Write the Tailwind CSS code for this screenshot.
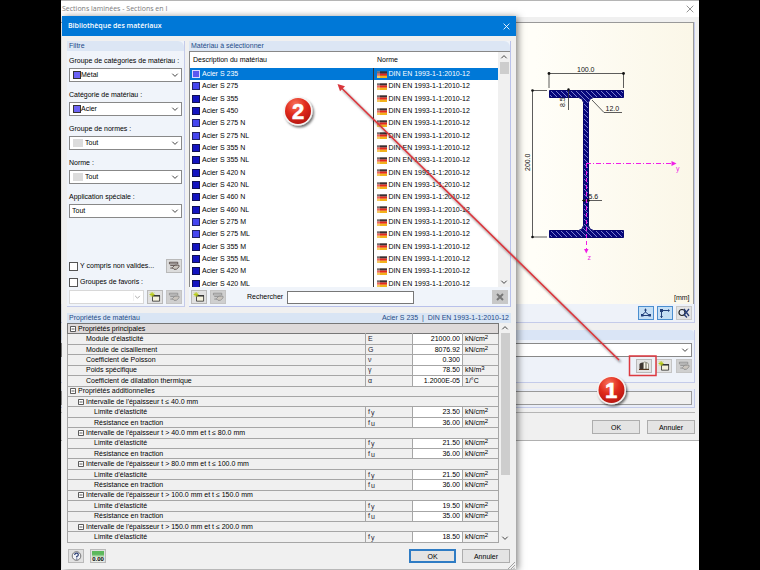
<!DOCTYPE html>
<html lang="fr">
<head>
<meta charset="utf-8">
<title>Bibliothèque des matériaux</title>
<script src="https://cdn.jsdelivr.net/npm/@tailwindcss/browser@4"></script>
</head>
<body class="bg-black font-['Liberation_Sans',sans-serif] text-[7px] leading-[10px] text-black">
<svg class="hidden" aria-hidden="true">
  <symbol id="chev" viewBox="0 0 8 8"><path d="M1.3 2.7 4 5.4 6.7 2.7" fill="none" stroke="#444" stroke-width="1"/></symbol>
  <symbol id="new" viewBox="0 0 14 12"><path d="M4 4.500h8.500v6.500H4z" fill="#f4f1dc" stroke="#333"/><path d="M3.500 4.500h9.500" stroke="#333" stroke-width="1.600"/><path d="M3.500 0v6M.5 3h6M1.300.8l4.400 4.400M5.700.8 1.300 5.200" stroke="#b9cc1c" stroke-width="1.200"/></symbol>
  <symbol id="edit" viewBox="0 0 14 12"><path d="M1.500 1.500h10v2h-10zM2.500 5.500h8M2.500 8.500h5" fill="#ddd" stroke="currentColor"/><path d="m5 8 3-3 5 0v2l-3 3H7z" fill="#c9c4bd" stroke="currentColor" stroke-width=".9"/></symbol>
  <symbol id="flag" viewBox="0 0 10 7"><path d="M0 .3h10v2.300H0z" fill="#3a3032"/><path d="M0 2.500h10v2.300H0z" fill="#e5281e"/><path d="M0 4.700h10V7H0z" fill="#f2b21c"/><path d="M0 0h3v7H0z" fill="#fff" opacity=".3"/></symbol>
</svg>
<main class="relative mx-[61px] min-h-screen overflow-hidden bg-white">

  <section aria-label="Sections laminées" class="border-b border-[#b0b0b0] bg-[#f0f0f0]">
    <header class="flex h-[17px] items-center justify-between border-t border-[#b5b5b5] bg-white pr-[5px] pl-px text-[#7d7d7d]">
      <h1 class="font-['Open_Sans',sans-serif]">Sections laminées - Sections en I</h1>
      <button aria-label="Fermer la fenêtre"><svg class="size-2" viewBox="0 0 8 8"><path d="m.7.7 6.600 6.600M7.300.7.7 7.300" stroke="#888" stroke-width=".9"/></svg></button>
    </header>
    <div class="pt-[5px] pr-1">
      <div class="border-r border-b border-[#c4cbea] bg-[#eef2f9]">
        <div class="flex justify-end border-t border-r border-[#999] bg-linear-to-r from-[#fffef8] from-75% to-[#fbf7e8]">
          <svg class="h-[281px] w-[177px]" viewBox="516 23 177 281" font-family="Liberation Sans, sans-serif" font-size="7" role="img" aria-label="Section en I">
            <defs><pattern id="hatch" width="5" height="5" patternUnits="userSpaceOnUse"><path d="M0 0h5v5H0z" fill="#07077c"/><path d="m-1-1 7 7M-1 4l2 2M4-1l2 2" stroke="#aeb2ee" stroke-width=".7"/></pattern></defs>
            <path d="M549.500 90.500h74v7h-30q-4.500.5-5 5v123q.5 4.500 5 5h30v7h-74v-7h29q4.500-.5 5-5v-123q-.5-4.500-5-5h-29z" fill="url(#hatch)" stroke="#07076e" stroke-width="1"/>
            <g fill="none" stroke="#333" stroke-width=".8"><path d="M549 88V73.500h74.500V88M547 90.500h-14.500v146.500H547M568.500 89v21M592 100l12 12.500h18M582 200.500h20"/></g>
            <g fill="#111"><circle cx="549" cy="73.500" r="1.400"/><circle cx="623.500" cy="73.500" r="1.400"/><circle cx="532.500" cy="90.500" r="1.300"/><circle cx="532.500" cy="237" r="1.300"/><circle cx="568.500" cy="89.500" r="1.200"/><circle cx="584" cy="200.500" r="1.300"/><circle cx="588.500" cy="200.500" r="1.300"/>
              <text x="577" y="71.500">100.0</text><text x="605.500" y="110.500">12.0</text><text x="588.500" y="198.500">5.6</text>
              <text transform="translate(530 171) rotate(-90)">200.0</text><text transform="translate(565 107) rotate(-90)">8.5</text><text x="674" y="299.500">[mm]</text></g>
            <g stroke="#f01ee6" stroke-width="1" fill="none"><path d="M586 163.500h86" stroke-dasharray="5 2 1 2"/><path d="M586.500 164v86" stroke-dasharray="4 3"/></g>
            <g fill="#f01ee6"><path d="m671.500 161 5 2.500-5 2.500zM584 249h4.500l-2.200 4.500z"/><text x="676" y="171">y</text><text x="587.500" y="260">z</text></g>
          </svg>
        </div>
        <div class="flex justify-end gap-[3px] py-[2px] pr-[2px]">
          <button aria-label="Axes" class="grid h-[14px] w-4 place-items-center border border-[#4b8fd0] bg-[#c5dff5]"><svg class="h-[10px] w-3" viewBox="0 0 12 10"><path d="M5.500 1v3.500M5.500 4 1.500 7.500M5.500 4l4 3.500M1 7.500h10" fill="none" stroke="#23407a" stroke-width="1"/><path d="M4 2.500 5.500.3 7 2.500zM1 6h2.500v2.500H1zM8.500 6H11v2.500H8.500z" fill="#23407a"/></svg></button>
          <button aria-label="Cotes" class="grid h-[14px] w-4 place-items-center border border-[#4b8fd0] bg-[#c5dff5]"><svg class="h-[10px] w-3" viewBox="0 0 12 10"><path d="M2.500 10V2.500H10" fill="none" stroke="#23407a"/><path d="M1 1h3v3H1zM9 1l2 1.500L9 4zM1 8h3L2.500 10z" fill="#23407a"/></svg></button>
          <button aria-label="Zoom" class="grid h-[14px] w-4 place-items-center border border-[#c9c9c9] bg-[#e3e3e3]"><svg class="h-[10px] w-3" viewBox="0 0 12 10"><circle cx="4" cy="4.500" r="3" fill="#dfe6f0" stroke="#222" stroke-width="1.200"/><path d="m6 6.500 3 3M6 1l5 7M11 1 6 7" stroke="#263d78" stroke-width="1.300"/></svg></button>
        </div>
      </div>
      <div class="mt-[7px] flex flex-col border-r border-b border-[#c4cbea] bg-[#eef2f9] pb-[9px]">
        <div class="h-[10px] rounded-tr bg-[#dae5f6]"></div>
        <div class="mt-[3px] mr-[2px] flex h-[14px] items-center border border-[#888] bg-white pr-[2px]">
          <select aria-label="Matériau" class="min-w-0 flex-1 appearance-none"><option></option></select><svg class="size-2"><use href="#chev"/></svg>
        </div>
        <div class="mt-[2px] mr-[2px] flex justify-end gap-[4px]">
          <button aria-label="Bibliothèque" class="grid h-[14px] w-4 place-items-center border border-[#b9b9b9] bg-[#e3e3e3]"><svg class="h-[10px] w-3" viewBox="0 0 12 10"><path d="M1.500 8V3q1-2 4-1.500V8z" fill="#3d3531"/><path d="M5.500 8V1.500q1.500-1.200 2.500 0V8zM8 8V1.500q2 0 2.500 1.500v5z" fill="#f7f3ea" stroke="#665" stroke-width=".6"/><path d="M1 8.500h10" stroke="#54331d" stroke-width="1"/></svg></button>
          <button aria-label="Nouveau matériau" class="grid h-[14px] w-4 place-items-center border border-[#c4c4c4] bg-[#e3e3e3]"><svg class="h-[10px] w-3"><use href="#new"/></svg></button>
          <button aria-label="Modifier le matériau" class="grid h-[14px] w-4 place-items-center border border-[#c4c4c4] bg-[#cfcfcf] text-[#888]"><svg class="h-[10px] w-3"><use href="#edit"/></svg></button>
        </div>
      </div>
      <div class="mt-[6px] flex border-r border-b border-[#c4cbea] bg-[#e9edf7] pt-[2px] pr-[2px] pb-[2px]">
        <input aria-label="Désignation" readonly class="h-[14px] min-w-0 flex-1 border border-[#999] bg-[#f0f0f0]">
      </div>
      <div class="mt-[4px] flex justify-end gap-[7px] border-t border-[#b5b5b5] pt-[7px] pb-[6px]">
        <button class="h-[14px] w-12 border border-[#adadad] bg-[#e4e4e4] leading-none">OK</button>
        <button class="h-[14px] w-12 border border-[#adadad] bg-[#e4e4e4] leading-none">Annuler</button>
      </div>
    </div>
  </section>

  <section role="dialog" aria-label="Bibliothèque des matériaux" class="absolute top-4 right-[183px] bottom-[1px] left-px flex flex-col bg-[#f0f0f0] shadow-[2px_1px_7px_rgba(0,0,0,0.5)]">
    <header class="flex h-5 shrink-0 items-center justify-between bg-[#0078d7] pr-[6px] pl-[6px] text-white">
      <h2 class="font-['Open_Sans',sans-serif] text-[7px] font-semibold">Bibliothèque des matériaux</h2>
      <button aria-label="Fermer"><svg class="size-[7px]" viewBox="0 0 8 8"><path d="m.7.7 6.600 6.600M7.300.7.7 7.300" stroke="#fff" stroke-width="1"/></svg></button>
    </header>
    <div class="flex flex-col px-[5px] pt-[5px]">
      <div class="flex gap-1">
        <div class="flex w-[118px] flex-col border-r border-b border-[#c4cbea] bg-[#f0f4fa]">
          <h3 class="rounded-tr-md bg-[#dce6f4] pl-[2px] text-[#244b88]">Filtre</h3>
          <form class="flex flex-1 flex-col pr-[2px] pb-[2px] pl-[2px]">
            <div id="filters" class="flex flex-col gap-2 pt-[5px]"></div>
            <div class="mt-auto flex items-center justify-between">
              <label class="flex items-center gap-[2px]"><input type="checkbox" class="size-[9px] appearance-none border border-[#555] bg-white">Y compris non valides...</label>
              <button type="button" aria-label="Filtrer" class="grid h-[14px] w-4 place-items-center border border-[#b9b9b9] bg-[#dcdcdc] text-[#4a3c38]"><svg class="h-[10px] w-3"><use href="#edit"/></svg></button>
            </div>
            <label class="mt-[4px] flex items-center gap-[2px]"><input type="checkbox" class="size-[9px] appearance-none border border-[#555] bg-white">Groupes de favoris :</label>
            <div class="mt-[3px] flex gap-[3px]">
              <div class="flex h-[14px] flex-1 items-center border border-[#d8d8d8] bg-white pr-[2px]"><select aria-label="Groupes de favoris" disabled class="min-w-0 flex-1 appearance-none"><option></option></select><svg class="size-2 border-l border-[#e4e4e4] opacity-50"><use href="#chev"/></svg></div>
              <button type="button" aria-label="Nouveau groupe" class="grid h-[14px] w-4 place-items-center border border-[#b9b9b9] bg-[#e1e1e1]"><svg class="h-[10px] w-3"><use href="#new"/></svg></button>
              <button type="button" aria-label="Modifier le groupe" class="grid h-[14px] w-4 place-items-center border border-[#c4c4c4] bg-[#cfcfcf] text-[#888]"><svg class="h-[10px] w-3"><use href="#edit"/></svg></button>
            </div>
          </form>
        </div>
        <div class="min-w-0 flex-1 border-r border-b border-[#b9c1ea] bg-[#f0f4fa]">
          <h3 class="rounded-tr-md bg-[#dce6f4] pl-[2px] text-[#244b88]">Matériau à sélectionner</h3>
          <div class="flex h-[236px] border-t border-l border-[#888] bg-white">
            <div class="min-w-0 flex-1 overflow-hidden">
              <table class="h-[238px] w-full table-fixed border-collapse">
                <thead><tr class="h-4 text-left"><th class="p-0 pl-[3px] font-normal">Description du matériau</th><th class="w-[125px] p-0 pl-[4px] font-normal">Norme</th></tr></thead>
                <tbody id="materials"></tbody>
              </table>
            </div>
            <div class="flex w-3 flex-col items-center bg-[#f0f0f0]">
              <svg class="my-px size-2 shrink-0 rotate-180"><use href="#chev"/></svg>
              <div class="h-3 w-[9px] bg-[#cdcdcd]"></div>
              <svg class="mt-auto mb-px size-2 shrink-0"><use href="#chev"/></svg>
            </div>
          </div>
          <div class="flex items-center gap-[3px] px-[2px] pt-[3px] pb-[2px]">
            <button aria-label="Nouveau" class="grid h-[14px] w-4 place-items-center border border-[#b9b9b9] bg-[#e1e1e1]"><svg class="h-[10px] w-3"><use href="#new"/></svg></button>
            <button aria-label="Modifier" class="grid h-[14px] w-4 place-items-center border border-[#c4c4c4] bg-[#cfcfcf] text-[#888]"><svg class="h-[10px] w-3"><use href="#edit"/></svg></button>
            <label for="q" class="pr-px pl-[18px]">Rechercher</label>
            <input id="q" class="h-[13px] w-[127px] border border-[#777] bg-white px-1">
            <button aria-label="Effacer" class="ml-auto grid h-[14px] w-4 place-items-center bg-[#c8c8c8]"><svg class="size-2" viewBox="0 0 8 8"><path d="m1 1 6 6M7 1 1 7" stroke="#777" stroke-width="2"/></svg></button>
          </div>
        </div>
      </div>
      <div class="mt-[6px] flex justify-between bg-[#d9e5f4] pr-[2px] pl-[2px] text-[#244b88]"><h3>Propriétés de matériau</h3><span class="whitespace-pre">Acier S 235  |  DIN EN 1993-1-1:2010-12</span></div>
      <div class="flex">
        <table class="h-[220px] min-w-0 flex-1 border-collapse border border-[#a6a6a6] leading-[8px]"><tbody id="props"></tbody></table>
        <div class="flex w-3 flex-col items-center">
          <svg class="my-px size-2 shrink-0 rotate-180"><use href="#chev"/></svg>
          <div class="h-[142px] w-[9px] bg-[#cdcdcd]"></div>
          <svg class="mt-auto mb-px size-2 shrink-0"><use href="#chev"/></svg>
        </div>
      </div>
    </div>
    <footer class="flex items-center gap-[6px] px-[6px] pt-[6px]">
      <button aria-label="Aide" class="grid h-[14px] w-4 place-items-center border border-[#b9b9b9] bg-[#e1e1e1]"><svg class="size-[11px]" viewBox="0 0 11 11"><circle cx="5.500" cy="5" r="4.300" fill="#f2f4f8" stroke="#555" stroke-width=".8"/><path d="M3.700 4q.2-2 2-1.800 2 .3 1.500 2-.3.8-1.500 1.300v1M5.700 7.500v1" fill="none" stroke="#2c3f74" stroke-width="1.200"/></svg></button>
      <button aria-label="Décimales" class="grid h-[14px] w-4 place-items-center border border-[#b9b9b9] bg-[#e1e1e1]"><span class="flex h-[11px] w-3 flex-col justify-end bg-linear-to-b from-[#5cb85c] from-30% to-[#e8eee6] to-60% text-[6px] leading-[6px] font-bold">0.00</span></button>
      <button class="ml-auto h-[14px] w-[47px] border-2 border-[#2f7cc4] bg-[#e4e4e4] leading-none">OK</button>
      <button class="h-[14px] w-12 border border-[#adadad] bg-[#e4e4e4] leading-none">Annuler</button>
    </footer>
    <svg class="absolute right-px bottom-0 size-[7px]" viewBox="0 0 7 7"><path d="M0 7 7 0M3 7l4-4M5.500 7 7 5.500" stroke="#999" stroke-width=".9"/></svg>
  </section>

  <svg class="pointer-events-none absolute top-0 right-0 h-[420px] w-[440px]" viewBox="259 0 440 420" aria-hidden="true">
    <defs>
      <radialGradient id="red" cx=".4" cy=".25" r=".8"><stop offset="0" stop-color="#f8745c"/><stop offset=".5" stop-color="#e02a1c"/><stop offset="1" stop-color="#b31410"/></radialGradient>
      <filter id="sh" x="-30%" y="-30%" width="170%" height="170%"><feDropShadow dx="1.500" dy="2" stdDeviation="1.300" flood-opacity=".55"/></filter>
    </defs>
    <path d="M619 360 341 87.500" stroke="#d9363c" stroke-width="1.600" filter="url(#sh)"/><path d="m337.500 84 7.500 2.300-5 5z" fill="#d9363c"/>
    <path d="M629.500 356h26.500v19.500h-26.500z" fill="none" stroke="#dd3940" stroke-width="1.500"/>
    <g filter="url(#sh)"><circle cx="298" cy="111" r="14.500" fill="#f6f3f2"/><circle cx="611.500" cy="390" r="14.500" fill="#f6f3f2"/></g>
    <circle cx="298" cy="111" r="13" fill="url(#red)"/><circle cx="611.500" cy="390" r="13" fill="url(#red)"/>
    <g fill="#fff" stroke="#fff" stroke-width=".6" font-family="Liberation Sans, sans-serif" font-size="22" font-weight="bold" text-anchor="middle"><text x="298" y="119">2</text><text x="611" y="398">1</text></g>
  </svg>
</main>
<script>
const filters = [["Groupe de catégories de matériau :", "Métal", 1], ["Catégorie de matériau :", "Acier", 1], ["Groupe de normes :", "Tout", 2], ["Norme :", "Tout", 2], ["Application spéciale :", "Tout", 0]];
const swatches = ["", '<span class="ml-[3px] size-[8px] border border-[#333] bg-[#6c63f5]"></span>', '<span class="ml-[3px] h-[8px] w-[10px] bg-[#dcdcdc]"></span>'];
const gaps = ["pl-[2px]", "pl-0", "pl-[2px]"];
document.getElementById("filters").innerHTML = filters.map(([label, value, kind], i) => `
  <div class="flex flex-col gap-[2px]"><label for="f${i}">${label}</label>
  <div class="flex h-[14px] items-center border border-[#888] bg-white pr-[2px]">${swatches[kind]}<select id="f${i}" class="min-w-0 flex-1 appearance-none leading-[10px] ${gaps[kind]}"><option>${value}</option></select><svg class="size-2"><use href="#chev"/></svg></div></div>`).join("");

const grades = ["235", "275", "355", "450", "275 N", "275 NL", "355 N", "355 NL", "420 N", "420 NL", "460 N", "460 NL", "275 M", "275 ML", "355 M", "355 ML", "420 M", "420 ML"];
document.getElementById("materials").innerHTML = grades.map((g, i) => {
  const color = i === 0 ? "border-[#d8d8ff] bg-[#5b58f0]" : g.startsWith("275") ? "border-[#222266] bg-[#4646f0]" : "border-[#111155] bg-[#1414c0]";
  return `<tr class="${i === 0 ? "bg-[#0078d7] text-white" : ""}"><td class="p-0 pl-[2px]"><div class="flex items-center gap-[2px]"><span class="size-[8px] border ${color}"></span>Acier S ${g}</div></td>
  <td class="border-l border-[#333] p-0 pl-[3px]"><div class="flex items-center gap-[2px]"><svg class="h-[7px] w-[10px]"><use href="#flag"/></svg>DIN EN 1993-1-1:2010-12</div></td></tr>`;
}).join("");

const cm2 = "kN/cm<sup>2</sup>", fy = "f<sub>y</sub>", fu = "f<sub>u</sub>";
const rows = [["Propriétés principales"],
  ["Module d'élasticité", "E", "21000.00", cm2], ["Module de cisaillement", "G", "8076.92", cm2], ["Coefficient de Poisson", "ν", "0.300", ""],
  ["Poids spécifique", "γ", "78.50", "kN/m<sup>3</sup>"], ["Coefficient de dilatation thermique", "α", "1.2000E-05", "1/°C"],
  ["Propriétés additionnelles"]];
[["t ≤ 40.0 mm", "23.50", "36.00"], ["t > 40.0 mm et t ≤ 80.0 mm", "21.50", "36.00"], ["t > 80.0 mm et t ≤ 100.0 mm", "21.50", "36.00"], ["t > 100.0 mm et t ≤ 150.0 mm", "19.50", "35.00"], ["t > 150.0 mm et t ≤ 200.0 mm", "18.50"]].forEach(([range, y, u]) => {
  rows.push(["Intervalle de l'épaisseur " + range, 1], ["Limite d'élasticité", fy, y, cm2, 1]);
  if (u) rows.push(["Résistance en traction", fu, u, cm2, 1]);
});
const box = '<svg class="size-[6px]" viewBox="0 0 6 6"><path d="M.5.5h5v5h-5zM1.500 3h3" fill="#fff" stroke="#333" stroke-width=".8"/></svg>';
document.getElementById("props").innerHTML = rows.map((r, i) => r.length < 3
  ? `<tr class="border ${i === 0 ? "border-[#777] bg-[#dedada]" : "border-[#a6a6a6]"}"><th colspan="4" class="p-0 text-left font-normal"><div class="flex items-center gap-[2px] ${r[1] ? "pl-[10px]" : "pl-[2px]"}">${box}${r[0].replace(">", "&gt;")}</div></th></tr>`
  : `<tr class="border border-[#a6a6a6] [&_sub]:bottom-[-1px] [&_sub]:pl-px [&_sub]:text-[7px] [&_sub]:leading-none [&_sup]:top-[-2px] [&_sup]:text-[6px] [&_sup]:leading-none"><th class="p-0 text-left font-normal ${r[4] ? "pl-[26px]" : "pl-[18px]"}">${r[0]}</th><td class="w-[47px] border-l border-[#a6a6a6] p-0 pl-[2px] text-[#223]">${r[1]}</td><td class="w-[50px] border-l border-[#a6a6a6] bg-white p-0 pr-[2px] text-right">${r[2]}</td><td class="w-[36px] border-l border-[#a6a6a6] p-0 pl-[2px]">${r[3]}</td></tr>`).join("");
</script>
</body>
</html>
